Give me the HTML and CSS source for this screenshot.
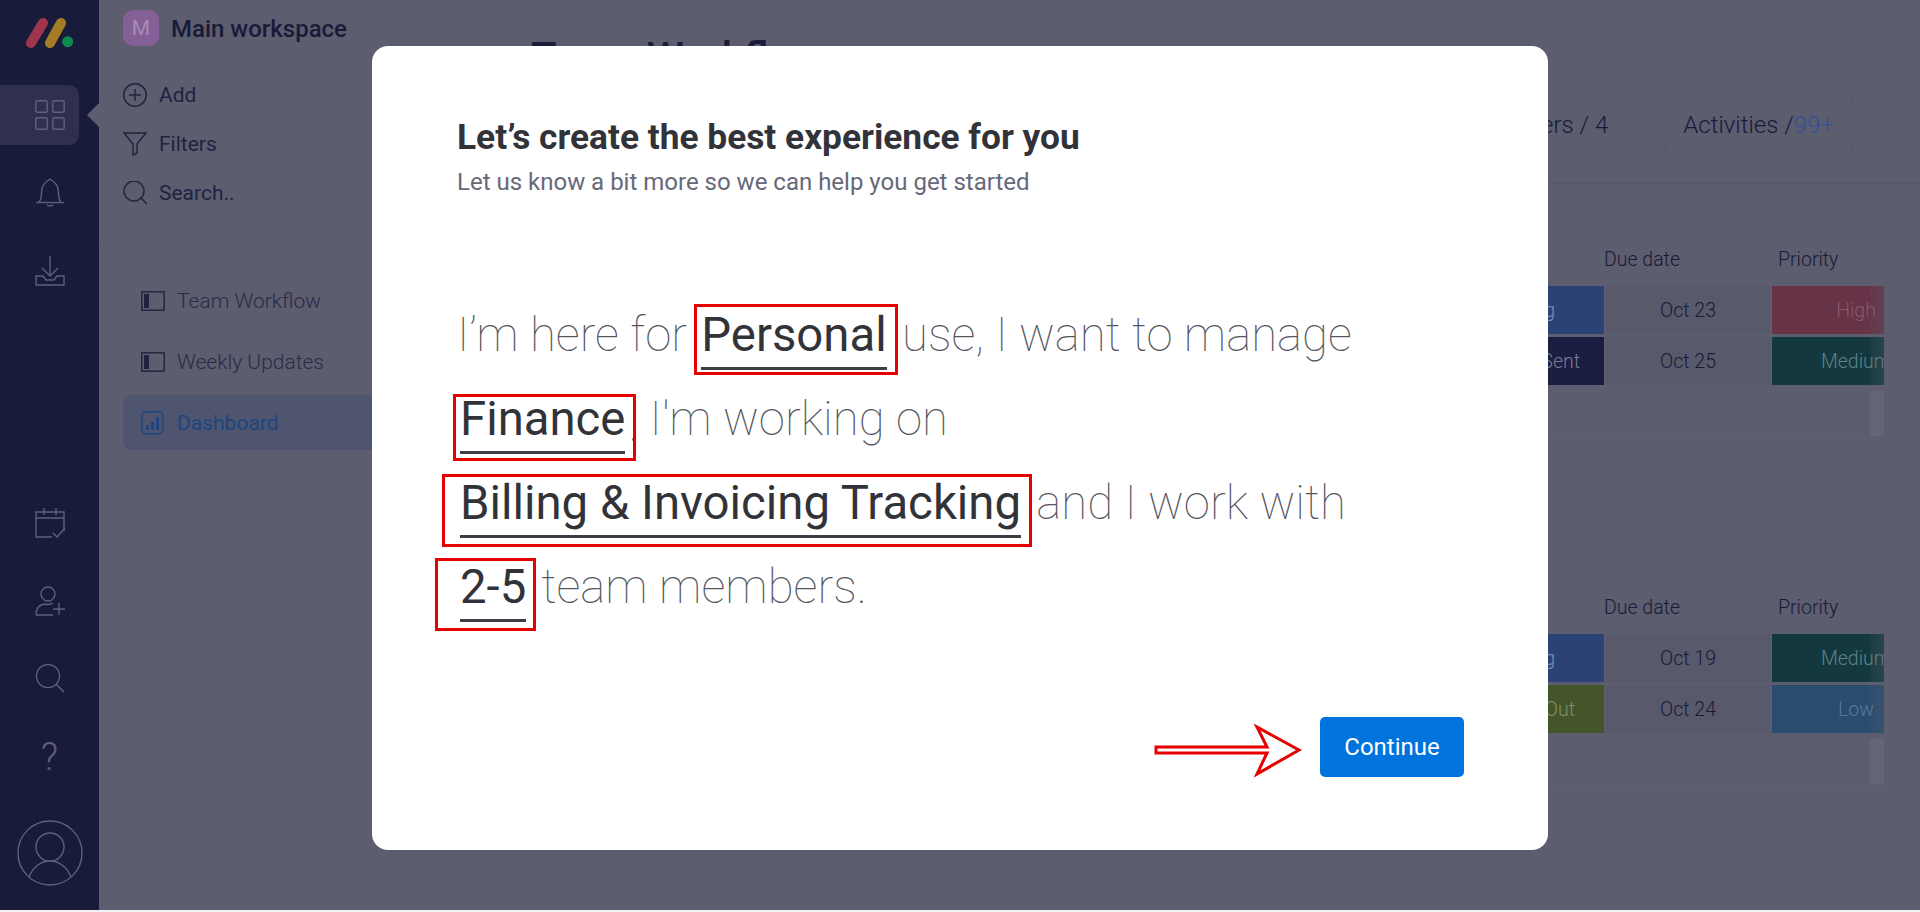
FILE: index.html
```html
<!DOCTYPE html>
<html lang="en">

<head>
    <meta charset="UTF-8">
    <meta name="viewport" content="width=device-width, initial-scale=1.0">
    <title>Team Workflow</title>
    <link rel="stylesheet" href="styles.css">
</head>

<body>
    <div class="app">
        <nav class="nav">
            <div class="nav-logo">
                <svg width="48" height="30" viewBox="0 0 48 30">
                    <line x1="5" y1="25" x2="17" y2="5" stroke="#a0364e" stroke-width="10" stroke-linecap="round" />
                    <line x1="24" y1="25" x2="35" y2="5" stroke="#a57c26" stroke-width="10" stroke-linecap="round" />
                    <circle cx="41.7" cy="23.7" r="5.5" fill="#118a4f" />
                </svg>
            </div>
            <div class="nav-item active">
                <svg class="nav-icon" width="30" height="30" viewBox="0 0 30 30">
                    <rect x="0.8" y="0.8" width="11.4" height="11.4" rx="1.5" />
                    <rect x="17.8" y="0.8" width="11.4" height="11.4" rx="1.5" />
                    <rect x="0.8" y="17.8" width="11.4" height="11.4" rx="1.5" />
                    <rect x="17.8" y="17.8" width="11.4" height="11.4" rx="1.5" />
                </svg>
            </div>
            <div class="nav-item">
                <svg class="nav-icon" width="30" height="30" viewBox="0 0 30 30">
                    <path d="M4 24c2-2 2.500-5 2.500-10C6.500 8 10 4 15 1c5 3 8.500 7 8.500 13 0 5 .5 8 2.500 10" />
                    <path d="M1 24.500h28" />
                    <path d="M12 26.500c1 2 5 2 6 0" />
                </svg>
            </div>
            <div class="nav-item">
                <svg class="nav-icon" width="30" height="30" viewBox="0 0 30 30">
                    <path d="M15 0v20M7 12l8 8 8-8" />
                    <path d="M8 20H1v9h28v-9h-7l-3 4h-8z" />
                </svg>
            </div>

            <div class="nav-bottom">
                <div class="nav-item">
                    <svg class="nav-icon" width="30" height="30" viewBox="0 0 30 30">
                        <path d="M17 29H1V4h28v19" />
                        <path d="M1 10h28M9 0v7M21 0v7" />
                        <path d="M18 25l4 4 8-9" />
                    </svg>
                </div>
                <div class="nav-item">
                    <svg class="nav-icon" width="30" height="30" viewBox="0 0 30 30">
                        <circle cx="13" cy="8" r="7" />
                        <path d="M1 29c0-6 3-10 8-11 4 1 6 1 9-1" />
                        <path d="M1 29h17M24 17v12M18 23h12" />
                    </svg>
                </div>
                <div class="nav-item">
                    <svg class="nav-icon" width="30" height="30" viewBox="0 0 30 30">
                        <circle cx="13" cy="12" r="11.500" />
                        <path d="M21 20l8 8" />
                    </svg>
                </div>
                <div class="nav-item nav-help">?</div>
                <div class="nav-avatar">
                    <svg class="nav-icon" width="66" height="66" viewBox="0 0 66 66">
                        <circle cx="33" cy="33" r="32" />
                        <circle cx="33" cy="27" r="14" />
                        <path d="M12 57c4-10 12-16 21-16s17 6 21 16" />
                    </svg>
                </div>
            </div>
        </nav>

        <aside class="panel">
            <div class="workspace">
                <span class="workspace-badge">M</span>
                <span class="workspace-name">Main workspace</span>
            </div>

            <div class="actions">
                <div class="action">
                    <svg class="panel-icon" width="24" height="24" viewBox="0 0 24 24">
                        <circle cx="12" cy="12" r="11.200" />
                        <path d="M12 6v12M6 12h12" />
                    </svg>
                    Add
                </div>
                <div class="action">
                    <svg class="panel-icon" width="24" height="24" viewBox="0 0 24 24">
                        <path d="M1 1h22l-9 11v9l-4 2V12z" />
                    </svg>
                    Filters
                </div>
                <div class="action">
                    <svg class="panel-icon" width="24" height="24" viewBox="0 0 24 24">
                        <circle cx="11" cy="10" r="10" />
                        <path d="M18 17l6 6" />
                    </svg>
                    Search..
                </div>
            </div>

            <div class="boards">
                <div class="board">
                    <svg class="panel-icon" width="24" height="20" viewBox="0 0 24 20">
                        <rect x="0.800" y="0.800" width="22.400" height="18.400" />
                        <rect class="icon-fill" x="3" y="3" width="5" height="14" />
                    </svg>
                    Team Workflow
                </div>
                <div class="board">
                    <svg class="panel-icon" width="24" height="20" viewBox="0 0 24 20">
                        <rect x="0.800" y="0.800" width="22.400" height="18.400" />
                        <rect class="icon-fill" x="3" y="3" width="5" height="14" />
                    </svg>
                    Weekly Updates
                </div>
                <div class="board selected">
                    <svg class="panel-icon" width="24" height="24" viewBox="0 0 24 24">
                        <rect x="0.800" y="0.800" width="21" height="22" rx="4" />
                        <path class="icon-bars" d="M5 14h3v5H5zM10 11h3v8h-3zM15 6h3v13h-3z" />
                    </svg>
                    Dashboard
                </div>
            </div>
        </aside>

        <main class="main">
            <header class="main-header">
                <h1 class="main-title">Team Workflow</h1>
                <div class="main-buttons">
                    <div class="count-box">Members / 4</div>
                    <div class="count-box">Activities /<span class="count-blue">99+</span></div>
                </div>
            </header>

            <section class="table first">
                <div class="table-head">
                    <span></span>
                    <span class="head-date">Due date</span>
                    <span class="head-priority">Priority</span>
                </div>
                <div class="row">
                    <div class="cell status blue pad-g">Working</div>
                    <div class="cell date">Oct 23</div>
                    <div class="cell priority high"><span>High</span></div>
                </div>
                <div class="row">
                    <div class="cell status navy pad-sent">Sent</div>
                    <div class="cell date">Oct 25</div>
                    <div class="cell priority medium"><span>Medium</span></div>
                </div>
                <div class="row-add"></div>
            </section>

            <section class="table second">
                <div class="table-head">
                    <span></span>
                    <span class="head-date">Due date</span>
                    <span class="head-priority">Priority</span>
                </div>
                <div class="row">
                    <div class="cell status blue pad-g">Working</div>
                    <div class="cell date">Oct 19</div>
                    <div class="cell priority medium"><span>Medium</span></div>
                </div>
                <div class="row">
                    <div class="cell status green pad-out">Out</div>
                    <div class="cell date">Oct 24</div>
                    <div class="cell priority low"><span>Low</span></div>
                </div>
                <div class="row-add"></div>
            </section>
        </main>
    </div>

    <div class="modal-layer">
        <div class="modal">
            <h2 class="modal-title">Let’s create the best experience for you</h2>
            <p class="modal-subtitle">Let us know a bit more so we can help you get started</p>

            <div class="sentence">
                <div class="line">I’m here for <span class="pick pick-personal">Personal</span> use, I want to manage</div>
                <div class="line"><span class="pick pick-finance">Finance</span>, I'm working on</div>
                <div class="line"><span class="pick pick-billing">Billing &amp; Invoicing Tracking</span> and I work with</div>
                <div class="line"><span class="pick pick-team">2-5</span> team members.</div>
            </div>

            <div class="modal-footer">
                <svg class="arrow" width="150" height="54" viewBox="0 0 150 54">
                    <path d="M3 23H114L104 3 146 26 104 50 114 29H3z" />
                </svg>
                <button class="continue">Continue</button>
            </div>
        </div>
    </div>
</body>

</html>
```

FILE: styles.css
```css
* {
    box-sizing: border-box;
}

body {
    margin: 0;
    height: 912px;
    overflow: hidden;
    background-color: #f4f4f6;
    font-family: Roboto, "Liberation Sans", sans-serif;
}

.app {
    display: flex;
    height: 910px;
    background-color: #5c5d6f;
    color: #20213f;
}

/* left nav */
.nav {
    width: 99px;
    flex-shrink: 0;
    display: flex;
    flex-direction: column;
    background-color: #191b3a;
}

.nav-logo {
    height: 76px;
    padding: 18px 0 0 26px;
}

.nav-item {
    position: relative;
    height: 78px;
    display: flex;
    align-items: center;
    justify-content: center;
}

.nav-item svg {
    position: relative;
}

.nav-item.active::before {
    content: "";
    position: absolute;
    left: 0;
    top: 9px;
    width: 79px;
    height: 60px;
    background-color: #2f3050;
    border-radius: 0 10px 10px 0;
}

.nav-item.active::after {
    content: "";
    position: absolute;
    right: 0;
    top: 27px;
    border-style: solid;
    border-width: 12px 12px 12px 0;
    border-color: transparent #5c5d6f transparent transparent;
}

.nav-icon {
    fill: none;
    stroke: #5f607a;
    stroke-width: 1.4;
}

.nav-bottom {
    margin-top: auto;
}

.nav-help {
    color: #5f607a;
    font-size: 38px;
    font-weight: 300;
}

.nav-avatar {
    height: 114px;
    padding-top: 24px;
    text-align: center;
}

/* workspace panel */
.panel {
    width: 384px;
    flex-shrink: 0;
    padding: 10px 0 0 24px;
    border-right: 1px solid #585969;
}

.workspace {
    display: flex;
    align-items: center;
    gap: 12px;
    height: 36px;
}

.workspace-badge {
    width: 36px;
    height: 36px;
    display: flex;
    align-items: center;
    justify-content: center;
    background-color: #845f98;
    border-radius: 10px;
    color: #a58db5;
    font-size: 21px;
}

.workspace-name {
    margin-top: 2px;
    font-size: 24px;
    font-weight: 500;
    color: #191a38;
}

.actions {
    margin-top: 24.500px;
    padding-bottom: 25.500px;
    margin-left: -20px;
    padding-left: 20px;
    border-bottom: 1px solid #585969;
}

.action {
    display: flex;
    align-items: center;
    gap: 12px;
    height: 49px;
    font-size: 21px;
    font-weight: 400;
    color: #21223f;
}

.panel-icon {
    fill: none;
    stroke: #21223f;
    stroke-width: 1.4;
    flex-shrink: 0;
}

.icon-fill {
    fill: #21223f;
    stroke: none;
}

.icon-bars {
    fill: #1d4580;
    stroke: none;
}

.boards {
    margin-top: 29px;
}

.board {
    display: flex;
    align-items: center;
    gap: 12px;
    height: 55px;
    margin-bottom: 6px;
    padding-left: 18px;
    border-radius: 8px;
    font-size: 21px;
    font-weight: 300;
    color: #2a2b47;
}

.board.selected {
    background-color: #4f556f;
    color: #1d4580;
    font-weight: 400;
}

.board.selected .panel-icon {
    stroke: #1d4580;
}

/* main board */
.main {
    flex: 1;
    min-width: 0;
}

.main-header {
    height: 184px;
    padding: 34px 67px 0 48px;
    border-bottom: 1px solid #565769;
}

.main-title {
    margin: 0 0 11px;
    font-size: 42px;
    line-height: 48px;
    font-weight: 500;
    color: #1b1c3b;
}

.main-buttons {
    display: flex;
    justify-content: flex-end;
    gap: 37px;
}

.count-box {
    height: 62px;
    padding: 2px 18px 0;
    display: flex;
    align-items: center;
    border: 1px solid #58596b;
    border-radius: 6px;
    font-size: 24px;
    font-weight: 300;
    color: #191a38;
}

.count-blue {
    color: #2f5296;
}

.table {
    width: 480px;
    margin: 0 36px 0 auto;
    font-weight: 300;
}

.first {
    margin-top: 60px;
}

.second {
    margin-top: 155px;
}

.table-head,
.row {
    display: grid;
    grid-template-columns: 200px 168px 112px;
}

.table-head {
    height: 30px;
    margin-bottom: 12px;
    line-height: 32px;
    font-size: 19.500px;
    color: #191a36;
}

.head-priority {
    padding-left: 6px;
}

.row {
    position: relative;
    height: 48px;
    margin-bottom: 3px;
}

.row::after {
    content: "";
    position: absolute;
    right: 0;
    top: 0;
    bottom: 0;
    width: 14px;
    background: linear-gradient(90deg, rgba(92, 93, 111, 0.1), rgba(92, 93, 111, 0.3));
}

.row-add::after {
    content: "";
    position: absolute;
    right: 0;
    top: 0;
    bottom: 0;
    width: 14px;
    background-color: rgba(255, 255, 255, 0.05);
}

.cell {
    display: flex;
    align-items: center;
    font-size: 19.500px;
    white-space: nowrap;
    overflow: hidden;
}

.status {
    justify-content: flex-end;
}

.pad-g {
    padding-right: 49px;
}

.pad-sent {
    padding-right: 24px;
}

.pad-out {
    padding-right: 29px;
}

.date {
    justify-content: center;
    background-color: #58596b;
    color: #191a36;
    border-left: 2px solid #5c5d6f;
    border-right: 2px solid #5c5d6f;
}

.priority span {
    flex: 0 0 168px;
    text-align: center;
}

.blue {
    background-color: #2a4275;
    color: #7f8fb0;
}

.navy {
    background-color: #1b1e41;
    color: #7b7c98;
}

.green {
    background-color: #445629;
    color: #7f8d6f;
}

.high {
    background-color: #673347;
    color: #87596c;
}

.medium {
    background-color: #13393f;
    color: #5d8287;
}

.low {
    background-color: #2a4c6e;
    color: #587a9a;
}

.row-add {
    position: relative;
    height: 46px;
    margin-top: 6px;
    border-bottom: 1px solid #5f6072;
}

/* modal and its red annotations */
.modal-layer {
    position: absolute;
    top: 46px;
    left: 0;
    right: 0;
    display: flex;
    justify-content: center;
}

.modal {
    width: 1176px;
    height: 804px;
    padding: 71px 84px 0 85px;
    background-color: white;
    border-radius: 16px;
    color: #323338;
}

.modal-title {
    margin: 0;
    font-size: 35.300px;
    line-height: 40px;
    font-weight: 700;
}

.modal-subtitle {
    margin: 10px 0 0;
    font-size: 24px;
    line-height: 30px;
    font-weight: 400;
    color: #676879;
}

.sentence {
    margin-top: 96px;
    font-size: 47.300px;
    font-weight: 100;
    color: #55565f;
}

.line {
    height: 84px;
    line-height: 84px;
    white-space: nowrap;
}

.pick {
    position: relative;
    display: inline-block;
    margin: 0 4px 0 2px;
    font-weight: 400;
    color: #323338;
}

.line > .pick:first-child {
    margin-left: 3px;
}

.pick::before {
    content: "";
    position: absolute;
    left: 0;
    right: 0;
    top: 74px;
    height: 3px;
    background-color: #3d3e46;
}

.pick::after {
    content: "";
    position: absolute;
    box-sizing: border-box;
    border: 3px solid #e60000;
}

.pick-personal::after {
    left: -7px;
    right: -11px;
    top: 11px;
    height: 71px;
}

.pick-finance::after {
    left: -7.500px;
    right: -11px;
    top: 17px;
    height: 67px;
}

.pick-billing::after {
    left: -18.500px;
    right: -10.500px;
    top: 13px;
    height: 73px;
}

.pick-team::after {
    left: -25px;
    right: -9.500px;
    top: 13px;
    height: 73px;
}

.modal-footer {
    margin-top: 88px;
    display: flex;
    justify-content: flex-end;
    align-items: flex-start;
    gap: 17px;
}

.arrow {
    margin-top: 7px;
    fill: white;
    stroke: #e60000;
    stroke-width: 3;
}

.continue {
    width: 144px;
    height: 60px;
    border: 0;
    border-radius: 5px;
    background-color: #0073dd;
    color: white;
    font-family: inherit;
    font-size: 24px;
}
```
